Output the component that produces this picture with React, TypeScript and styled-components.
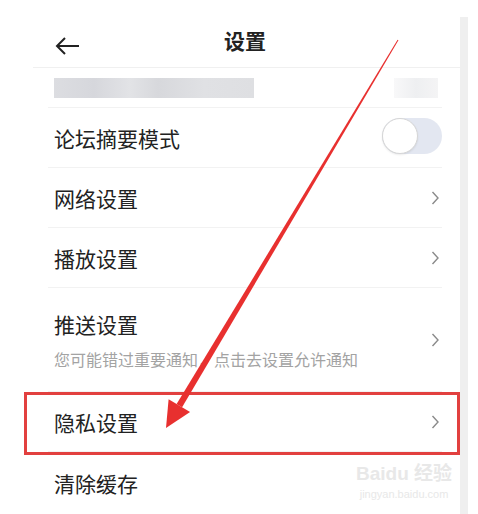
import React from 'react';
import styled, { createGlobalStyle } from 'styled-components';

const GlobalStyle = createGlobalStyle`
  html, body {
    margin: 0;
    padding: 0;
    background: #ffffff;
  }
  body {
    font-family: "Noto Sans CJK SC", "Noto Sans", sans-serif;
    color: #222222;
  }
`;

const Page = styled.div`
  position: relative;
  width: 478px;
  height: 514px;
  overflow: hidden;
  display: flex;
  padding-left: 33px;
  padding-top: 17px;
  box-sizing: border-box;
`;

const Screen = styled.div`
  width: 427px;
  display: flex;
  flex-direction: column;
`;

const ScrollStrip = styled.div`
  width: 8px;
  background: #efefef;
`;

const Header = styled.div`
  height: 54px;
  display: flex;
  align-items: center;
  justify-content: center;
  position: relative;
  border-bottom: 1px solid #f0f0f0;
  box-sizing: border-box;
`;

const BackButton = styled.div`
  position: absolute;
  left: 21px;
  top: 19px;
  display: flex;
`;

const Title = styled.div`
  font-size: 21px;
  font-weight: 700;
  color: #222;
  margin-left: -3px;
  margin-top: -4px;
`;

const List = styled.div`
  display: flex;
  flex-direction: column;
  padding-left: 15px;
  padding-right: 18px;
`;

const Row = styled.div<{ $height: number; $last?: boolean }>`
  height: ${p => p.$height}px;
  display: flex;
  align-items: center;
  justify-content: space-between;
  padding-left: 6px;
  padding-right: 2px;
  border-bottom: ${p => (p.$last ? 'none' : '1px solid #f2f2f2')};
  box-sizing: border-box;
`;

const TextCol = styled.div`
  display: flex;
  flex-direction: column;
  gap: 12px;
`;

const Label = styled.div`
  font-size: 21px;
  line-height: 26px;
  color: #222;
`;

const Sub = styled.div`
  font-size: 16px;
  line-height: 20px;
  color: #a3a3a3;
`;

const Blur = styled.div`
  width: 200px;
  height: 20px;
  background: linear-gradient(
    90deg,
    #dcdde1 0%,
    #d6d7dc 20%,
    #e2e3e6 38%,
    #d7d8dc 52%,
    #e0e1e4 75%,
    #dedfe2 100%
  );
`;

const BlurRight = styled.div`
  width: 44px;
  height: 20px;
  margin-right: 2px;
  background: linear-gradient(90deg, #f8f8f9, #eeeff1, #f4f4f5);
`;

const Toggle = styled.div`
  width: 60px;
  height: 36px;
  border-radius: 18px;
  background: #e3e7f1;
  position: relative;
  margin-right: -2px;
  margin-top: -4px;
`;

const Knob = styled.div`
  position: absolute;
  left: 0;
  top: 0;
  width: 34px;
  height: 34px;
  border-radius: 50%;
  background: #fff;
  border: 1px solid #d6d6d6;
  box-shadow: 0 1px 2px rgba(0, 0, 0, 0.08);
`;

const Highlight = styled.div`
  position: absolute;
  left: 24px;
  top: 392px;
  width: 436px;
  height: 63px;
  border: 3px solid #e2403f;
  box-sizing: border-box;
  pointer-events: none;
`;

const Watermark = styled.div`
  position: absolute;
  left: 356px;
  top: 462px;
  display: flex;
  flex-direction: column;
  align-items: center;
  white-space: nowrap;
  color: #e8e8e8;
  font-family: "Liberation Sans", "Noto Sans CJK SC", sans-serif;
`;

const MarkTop = styled.div`
  font-size: 19px;
  font-weight: 700;
  line-height: 24px;
`;

const MarkUrl = styled.div`
  font-size: 11px;
  line-height: 16px;
`;

const Overlay = styled.svg`
  position: absolute;
  left: 0;
  top: 0;
  pointer-events: none;
`;

const Chevron = () => (
  <svg width="9" height="16" viewBox="0 0 9 16">
    <path d="M1.5 2 L7 8 L1.5 14" fill="none" stroke="#8a8a8a" strokeWidth="1.4" />
  </svg>
);

const ArrowBack = () => (
  <svg width="26" height="20" viewBox="0 0 26 20">
    <path d="M25 10 H3 M11 2 L3 10 L11 18" fill="none" stroke="#222" strokeWidth="2" />
  </svg>
);

// red annotation arrow, tapered shaft from top right to the privacy row
const tip = { x: 166, y: 428 };
const start = { x: 398, y: 40 };
const dx = tip.x - start.x;
const dy = tip.y - start.y;
const len = Math.hypot(dx, dy);
const ux = dx / len;
const uy = dy / len;
const nx = -uy;
const ny = ux;
const headLen = 26;
const headHalf = 12.5;
const base = { x: tip.x - headLen * ux, y: tip.y - headLen * uy };
const shaft = [
  [start.x + 0.5 * nx, start.y + 0.5 * ny],
  [base.x + 3.2 * nx, base.y + 3.2 * ny],
  [base.x - 3.2 * nx, base.y - 3.2 * ny],
  [start.x - 0.5 * nx, start.y - 0.5 * ny],
];
const head = [
  [tip.x, tip.y],
  [base.x + headHalf * nx, base.y + headHalf * ny],
  [base.x - headHalf * nx, base.y - headHalf * ny],
];
const pts = (a: number[][]) => a.map(p => p.join(',')).join(' ');

export default function App() {
  return (
    <>
      <GlobalStyle />
      <Page>
        <Screen>
          <Header>
            <BackButton>
              <ArrowBack />
            </BackButton>
            <Title>设置</Title>
          </Header>
          <List>
            <Row $height={40}>
              <Blur />
              <BlurRight />
            </Row>
            <Row $height={60}>
              <Label>论坛摘要模式</Label>
              <Toggle>
                <Knob />
              </Toggle>
            </Row>
            <Row $height={60}>
              <Label>网络设置</Label>
              <Chevron />
            </Row>
            <Row $height={60}>
              <Label>播放设置</Label>
              <Chevron />
            </Row>
            <Row $height={104}>
              <TextCol>
                <Label>推送设置</Label>
                <Sub>您可能错过重要通知，点击去设置允许通知</Sub>
              </TextCol>
              <Chevron />
            </Row>
            <Row $height={60}>
              <Label>隐私设置</Label>
              <Chevron />
            </Row>
            <Row $height={62} $last>
              <Label>清除缓存</Label>
            </Row>
          </List>
        </Screen>
        <ScrollStrip />
        <Highlight />
        <Watermark>
          <MarkTop>Baidu 经验</MarkTop>
          <MarkUrl>jingyan.baidu.com</MarkUrl>
        </Watermark>
        <Overlay width="478" height="514" viewBox="0 0 478 514">
          <polygon points={pts(shaft)} fill="#e8302f" />
          <polygon points={pts(head)} fill="#e8302f" />
        </Overlay>
      </Page>
    </>
  );
}
